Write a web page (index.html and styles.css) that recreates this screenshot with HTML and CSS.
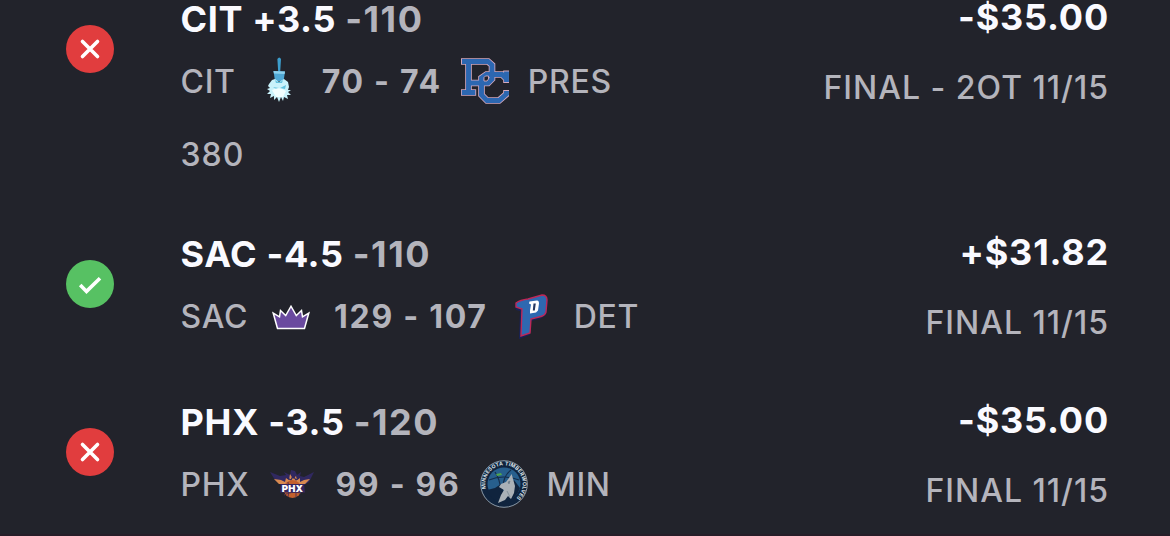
FILE: index.html
```html
<!DOCTYPE html>
<html lang="en">
<head>
    <meta charset="UTF-8">
    <meta name="viewport" content="width=device-width, initial-scale=1.0">
    <title>Bet History</title>
    <link rel="stylesheet" href="styles.css">
</head>
<body>
    <main class="bets">
        <!-- Citadel at Presbyterian -->
        <article class="bet">
            <svg class="status" viewBox="0 0 48 48">
                <circle cx="24" cy="24" r="24" fill="#e13d3e"/>
                <path d="M16.5 16.5l15 15M31.5 16.5l-15 15" stroke="#fff" stroke-width="3.6" stroke-linecap="round"/>
            </svg>
            <div class="pick">
                <h2>CIT +3.5 <span>-110</span></h2>
                <div class="matchup">
                    <span>CIT</span>
                    <svg class="logo" viewBox="0 0 48 48">
                        <path d="M22.4 2q1.8-3 3.6 0l-.8 13h-2z" fill="#3c9dcc"/>
                        <path d="M18.500 14l11.500 .5-1.500 10-8.500-.5z" fill="#4fa8d5"/>
                        <path d="M18.500 14l11.500 .5-.4 2.500-10.700-.5z" fill="#8dd0ec"/>
                        <path d="M14 27l3-4 3-1 4 3 5-3 4 3 1 5-1 3 3 0-3 2 3 3-4 0 1 4-4-2-1 4-2-4-2 5-2-5-3 3v-4l-4 2 1-4-4 0 3-3-3-2 3-1-2-2z" fill="#c9f2fb"/>
                        <path d="M20 23q4 4 8 0l-1 3h-6zM18 30l6 1-3 1zM25 31l6-3-1 4z" fill="#63c2df"/>
                        <path d="M17 33q7-4 14 1l-3 6h-7z" fill="#f1feff"/>
                    </svg>
                    <strong>70 - 74</strong>
                    <svg class="logo" viewBox="0 0 48 48">
                        <g fill="none" stroke-width="6.6" stroke="#d3a9bf">
                            <path d="M0 4.500H27L31 8V22L27 26H9M7.500 4V36M-.2 35.500H15.200"/>
                            <path d="M45.500 26V13.500M45.500 22L41 17.500H25.500L20.500 21V38L26 43.500H38L45.500 37V33"/>
                        </g>
                        <g fill="none" stroke-width="4.9" stroke="#2c67b1">
                            <path d="M1 4.500H27L31 8V22L27 26H9M7.500 4V36M.8 35.500H14.300"/>
                            <path d="M45.500 25V14.500M45.500 22L41 17.500H25.500L20.500 21V38L26 43.500H38L45.500 37V34"/>
                        </g>
                        <path d="M23 20.500l1.500-1.500h3v3l-1.500 2h-3z" fill="#22232b" stroke="#d3a9bf" stroke-width=".9"/>
                    </svg>
                    <span>PRES</span>
                </div>
                <div class="extra">380</div>
            </div>
            <div class="result">
                <strong>-$35.00</strong>
                <span>FINAL - 2OT 11/15</span>
            </div>
        </article>

        <!-- Kings at Pistons -->
        <article class="bet">
            <svg class="status" viewBox="0 0 48 48">
                <circle cx="24" cy="24" r="24" fill="#57c163"/>
                <path d="M14.2 25l6.3 6.4L34 18.3" fill="none" stroke="#fff" stroke-width="3.6"/>
            </svg>
            <div class="pick">
                <h2>SAC -4.5 <span>-110</span></h2>
                <div class="matchup">
                    <span>SAC</span>
                    <svg class="logo" viewBox="0 0 48 48">
                        <path d="M10.5 36.5L6.2 21l6.3 3.8 1-6.3 5.2 5L24 14.2l5.3 9.3 5.2-5 1 6.3 6.3-3.8-4.3 15.5z" fill="#6a4a9f" stroke="#fff" stroke-width="1.5"/>
                    </svg>
                    <strong>129 - 107</strong>
                    <svg class="logo" viewBox="0 0 48 48">
                        <path d="M8 13l5-3 22-6 5 2 1 4-2 13-6 4-9 2-1 14-11 4 1-28-4-1z" fill="#182257"/>
                        <path d="M9 11q4-3 12-4l14-4q5 0 5 5l-1 12q-1 4-7 5l-8 2-1 14-9 3 1-27-6-2z" fill="#2e68b1" stroke="#bd2858" stroke-width="1.4"/>
                        <path d="M22.500 9.500l7.500-1q2 0 2 3l-1 7-2 2-6 1v-3l1-6-2-1z" fill="#fff"/>
                        <path d="M26.500 11.500h2.300l-1 7h-2z" fill="#263861"/>
                    </svg>
                    <span>DET</span>
                </div>
            </div>
            <div class="result">
                <strong>+$31.82</strong>
                <span>FINAL 11/15</span>
            </div>
        </article>

        <!-- Suns at Timberwolves -->
        <article class="bet">
            <svg class="status" viewBox="0 0 48 48">
                <circle cx="24" cy="24" r="24" fill="#e13d3e"/>
                <path d="M16.5 16.5l15 15M31.5 16.5l-15 15" stroke="#fff" stroke-width="3.6" stroke-linecap="round"/>
            </svg>
            <div class="pick">
                <h2>PHX -3.5 <span>-120</span></h2>
                <div class="matchup">
                    <span>PHX</span>
                    <svg class="logo" viewBox="0 0 48 48">
                        <path d="M2 12l10 4 6-1-2-3 6 3 1-5 4 1 2 4 4-3-1 4 4 1 10-5-5 10-5 3H13l-6-5z" fill="#302860"/>
                        <path d="M6 19l7 1 4 2 1-4 3 2 1-6 3 5 3-3 1 4 3-2 0 4 4-2 6-1-5 5H11z" fill="#d98a50"/>
                        <path d="M19 18l4 2 2-4 3 4 3-2" fill="none" stroke="#302860" stroke-width="1.2"/>
                        <circle cx="24.5" cy="29" r="9" fill="#c3602d"/>
                        <path d="M16 35q7-4 17-2M20 22q2 9 0 15M28 37q-1-6 2-9" fill="none" stroke="#55304d" stroke-width="1"/>
                        <path d="M13 24h23l1 8.500H12z" fill="#35265f"/>
                        <text class="suns-text" x="24.5" y="31.500">PHX</text>
                    </svg>
                    <strong>99 - 96</strong>
                    <svg class="logo" viewBox="0 0 48 48">
                        <defs>
                            <path id="ring" d="M6 29A18.7 18.7 0 1 1 36 38.3"/>
                        </defs>
                        <circle cx="24" cy="24" r="23.3" fill="#10243e" stroke="#8a99a7" stroke-width="1"/>
                        <circle cx="24" cy="24" r="16.5" fill="#275f8d"/>
                        <path d="M9 20q14-6 30 0M15 12q8 12 4 26M31 10q-8 6-8 18" fill="none" stroke="#152d4b" stroke-width="1.2"/>
                        <path d="M7 30l8-2 6-4 3 8 10-12 6 8q-4 12-16 14-13-1-17-12z" fill="#10243e"/>
                        <path d="M31.7 14l1.3 5 2 7-1 7-3 6-3-3-3 4-7 3 3-8 3-5-5-3 2-3 5-2 3-4z" fill="#aab1b7"/>
                        <path d="M28 22l2-1-1 3zM27 31l3 6" fill="#687886" stroke="#687886" stroke-width=".6"/>
                        <path d="M16 14l5-1 1 2-5 1z" fill="#50a64c"/>
                        <text class="wolves-text"><textPath href="#ring" startOffset="50%">MINNESOTA TIMBERWOLVES</textPath></text>
                    </svg>
                    <span>MIN</span>
                </div>
            </div>
            <div class="result">
                <strong>-$35.00</strong>
                <span>FINAL 11/15</span>
            </div>
        </article>
    </main>
</body>
</html>
```
FILE: styles.css
```css
body {
    font-family: 'Inter', sans-serif;
    margin: 0;
    background-color: #22232b;
    color: #b4b4bc;
    overflow: hidden;
}

.bets {
    box-sizing: border-box;
    height: 541px;
    margin-top: -5px;
    padding: 0 61px 0 66px;
    border-bottom: 2px solid #261d28;
}

.bet {
    display: grid;
    grid-template-columns: 48px 1fr auto;
    column-gap: 66.5px;
    padding-bottom: 51px;
}

.bet:last-child {
    padding-bottom: 0;
}

.status {
    width: 48px;
    height: 48px;
    margin-top: 30px;
}

.pick {
    padding-top: 2px;
}

h2 {
    margin: 0 0 16px;
    font-size: 36px;
    font-weight: 700;
    line-height: 44px;
    letter-spacing: 0.6px;
    color: #fafaff;
}

h2 span {
    font-weight: 650;
    letter-spacing: 1.5px;
    color: #b4b4bc;
}

.matchup {
    display: flex;
    align-items: center;
    gap: 19px;
    height: 48px;
    font-size: 32px;
    font-weight: 450;
    letter-spacing: 0.7px;
}

.matchup strong {
    font-weight: 700;
    letter-spacing: 1.7px;
}

.logo {
    width: 48px;
    height: 48px;
}

.extra {
    margin-top: 32px;
    padding-bottom: 6px;
    font-size: 32px;
    font-weight: 450;
    line-height: 36px;
    letter-spacing: 1px;
}

.result {
    display: flex;
    flex-direction: column;
    align-items: flex-end;
    gap: 25px;
}

.result strong {
    font-size: 36px;
    font-weight: 700;
    line-height: 44px;
    letter-spacing: 0.8px;
    color: #fafaff;
}

.result span {
    font-size: 32px;
    font-weight: 450;
    line-height: 48px;
    letter-spacing: 1px;
}

.suns-text {
    font-size: 9.5px;
    font-weight: 900;
    letter-spacing: 0.3px;
    text-anchor: middle;
    fill: #fff;
}

.wolves-text {
    font-size: 5.2px;
    font-weight: 700;
    letter-spacing: 0.2px;
    text-anchor: middle;
    fill: #dbe1e7;
}
```
